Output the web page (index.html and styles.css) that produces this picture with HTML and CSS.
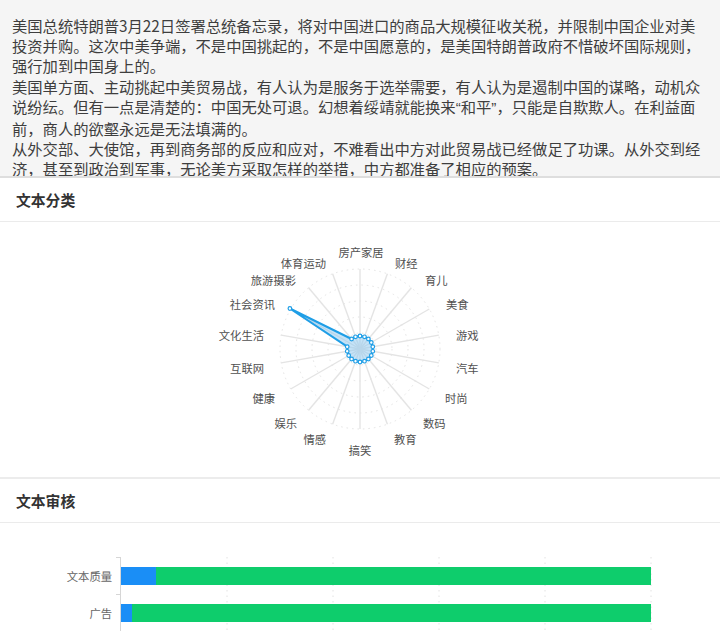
FILE: index.html
```html
<!DOCTYPE html>
<html lang="zh-CN">
<head>
<meta charset="utf-8">
<title>文本分析</title>
<link rel="stylesheet" href="styles.css">
</head>
<body>
<div class="page">
  <div class="source">
    <p>美国总统特朗普3月22日签署总统备忘录，将对中国进口的商品大规模征收关税，并限制中国企业对美投资并购。这次中美争端，不是中国挑起的，不是中国愿意的，是美国特朗普政府不惜破坏国际规则，强行加到中国身上的。</p>
    <p>美国单方面、主动挑起中美贸易战，有人认为是服务于选举需要，有人认为是遏制中国的谋略，动机众说纷纭。但有一点是清楚的：中国无处可退。幻想着绥靖就能换来<span class="q">“</span>和平<span class="q">”</span>，只能是自欺欺人。在利益面前，商人的欲壑永远是无法填满的。</p>
    <p>从外交部、大使馆，再到商务部的反应和应对，不难看出中方对此贸易战已经做足了功课。从外交到经济，甚至到政治到军事，无论美方采取怎样的举措，中方都准备了相应的预案。</p>
  </div>

  <section class="card">
    <div class="card-head">文本分类</div>
    <div class="card-body radar-body">
      <svg class="radar" width="720" height="255" viewBox="0 0 720 255">
        <g class="rings">
          <circle cx="360" cy="127" r="16"/>
          <circle cx="360" cy="127" r="32"/>
          <circle cx="360" cy="127" r="48"/>
          <circle cx="360" cy="127" r="64"/>
          <circle cx="360" cy="127" r="80"/>
        </g>
        <g class="spokes">
          <line x1="360" y1="127" x2="360.0" y2="47.0"/>
          <line x1="360" y1="127" x2="387.4" y2="51.8"/>
          <line x1="360" y1="127" x2="411.4" y2="65.7"/>
          <line x1="360" y1="127" x2="429.3" y2="87.0"/>
          <line x1="360" y1="127" x2="438.8" y2="113.1"/>
          <line x1="360" y1="127" x2="438.8" y2="140.9"/>
          <line x1="360" y1="127" x2="429.3" y2="167.0"/>
          <line x1="360" y1="127" x2="411.4" y2="188.3"/>
          <line x1="360" y1="127" x2="387.4" y2="202.2"/>
          <line x1="360" y1="127" x2="360.0" y2="207.0"/>
          <line x1="360" y1="127" x2="332.6" y2="202.2"/>
          <line x1="360" y1="127" x2="308.6" y2="188.3"/>
          <line x1="360" y1="127" x2="290.7" y2="167.0"/>
          <line x1="360" y1="127" x2="281.2" y2="140.9"/>
          <line x1="360" y1="127" x2="281.2" y2="113.1"/>
          <line x1="360" y1="127" x2="290.7" y2="87.0"/>
          <line x1="360" y1="127" x2="308.6" y2="65.7"/>
          <line x1="360" y1="127" x2="332.6" y2="51.8"/>
        </g>
        <polygon class="area" points="360.0,114.0 364.5,114.8 368.4,117.0 371.3,120.5 372.8,124.7 372.8,129.3 371.3,133.5 368.4,137.0 364.5,139.2 360.0,140.0 355.5,139.2 351.6,137.0 348.7,133.5 347.2,129.3 347.2,124.7 289.9,86.5 351.6,117.0 355.5,114.8"/>
        <g class="dots">
          <circle cx="360.0" cy="114.0" r="1.8"/>
          <circle cx="364.5" cy="114.8" r="1.8"/>
          <circle cx="368.4" cy="117.0" r="1.8"/>
          <circle cx="371.3" cy="120.5" r="1.8"/>
          <circle cx="372.8" cy="124.7" r="1.8"/>
          <circle cx="372.8" cy="129.3" r="1.8"/>
          <circle cx="371.3" cy="133.5" r="1.8"/>
          <circle cx="368.4" cy="137.0" r="1.8"/>
          <circle cx="364.5" cy="139.2" r="1.8"/>
          <circle cx="360.0" cy="140.0" r="1.8"/>
          <circle cx="355.5" cy="139.2" r="1.8"/>
          <circle cx="351.6" cy="137.0" r="1.8"/>
          <circle cx="348.7" cy="133.5" r="1.8"/>
          <circle cx="347.2" cy="129.3" r="1.8"/>
          <circle cx="347.2" cy="124.7" r="1.8"/>
          <circle cx="289.9" cy="86.5" r="1.8"/>
          <circle cx="351.6" cy="117.0" r="1.8"/>
          <circle cx="355.5" cy="114.8" r="1.8"/>
        </g>
        <g class="labels">
          <text x="361" y="30" text-anchor="middle">房产家居</text>
          <text x="395" y="41" text-anchor="start">财经</text>
          <text x="425" y="58" text-anchor="start">育儿</text>
          <text x="446" y="82" text-anchor="start">美食</text>
          <text x="456" y="113" text-anchor="start">游戏</text>
          <text x="456" y="146" text-anchor="start">汽车</text>
          <text x="445" y="176" text-anchor="start">时尚</text>
          <text x="423" y="201" text-anchor="start">数码</text>
          <text x="394" y="217" text-anchor="start">教育</text>
          <text x="360" y="228" text-anchor="middle">搞笑</text>
          <text x="326" y="217" text-anchor="end">情感</text>
          <text x="297" y="201" text-anchor="end">娱乐</text>
          <text x="275" y="176" text-anchor="end">健康</text>
          <text x="264" y="146" text-anchor="end">互联网</text>
          <text x="264" y="113" text-anchor="end">文化生活</text>
          <text x="275" y="82" text-anchor="end">社会资讯</text>
          <text x="296" y="58" text-anchor="end">旅游摄影</text>
          <text x="326" y="41" text-anchor="end">体育运动</text>
        </g>
      </svg>
    </div>
  </section>

  <section class="card">
    <div class="card-head">文本审核</div>
    <div class="card-body bar-body">
      <svg class="bars" width="720" height="110" viewBox="0 0 720 110">
        <g class="grid">
          <line x1="227" y1="34" x2="227" y2="110"/>
          <line x1="333" y1="34" x2="333" y2="110"/>
          <line x1="439" y1="34" x2="439" y2="110"/>
          <line x1="545" y1="34" x2="545" y2="110"/>
          <line x1="651" y1="34" x2="651" y2="110"/>
        </g>
        <g class="axis">
          <line x1="120.5" y1="34" x2="120.5" y2="110"/>
          <line x1="116" y1="34.5" x2="120.5" y2="34.5"/>
          <line x1="116" y1="71.5" x2="120.5" y2="71.5"/>
          <line x1="116" y1="108.5" x2="120.5" y2="108.5"/>
        </g>
        <rect class="ok" x="156" y="44" width="495" height="18"/>
        <rect class="bad" x="121" y="44" width="35" height="18"/>
        <rect class="ok" x="132" y="81" width="519" height="18"/>
        <rect class="bad" x="121" y="81" width="11" height="18"/>
        <g class="cat">
          <text x="112" y="53" text-anchor="end">文本质量</text>
          <text x="112" y="90" text-anchor="end">广告</text>
        </g>
      </svg>
    </div>
  </section>
</div>
</body>
</html>
```

FILE: styles.css
```css
* {
  box-sizing: border-box;
}

html, body {
  margin: 0;
  padding: 0;
  background: #ffffff;
}

body {
  width: 720px;
  height: 631px;
  overflow: hidden;
  font-family: "Noto Sans CJK SC", "Noto Sans", sans-serif;
  color: #444444;
}

.page {
  display: flex;
  flex-direction: column;
}

.source {
  height: 178px;
  padding: 15px 14px 0 12px;
  background: #f5f5f5;
  border-bottom: 2px solid #dedede;
  overflow: hidden;
  font-size: 15.3px;
  line-height: 20.2px;
  color: #3e3e3e;
}

.source p {
  margin: 0;
}

.source .q {
  font-family: "Liberation Sans", "Noto Sans", sans-serif;
}

.card {
  display: flex;
  flex-direction: column;
  background: #ffffff;
}

.card + .card {
  border-top: 2px solid #ececec;
}

.card-head {
  height: 44px;
  padding-left: 16px;
  display: flex;
  align-items: center;
  font-size: 14.8px;
  font-weight: 700;
  color: #333333;
  border-bottom: 1px solid #ebebeb;
}

.card-body {
  display: flex;
}

.radar-body {
  height: 255px;
}

.bar-body {
  height: 110px;
}

.radar .rings circle {
  fill: none;
  stroke: #e4e4e4;
  stroke-width: 1;
  stroke-dasharray: 1.5 4;
}

.radar .spokes line {
  stroke: #e4e4e4;
  stroke-width: 1.4;
}

.radar .area {
  fill: rgba(140, 200, 240, 0.5);
  stroke: #1f9ee6;
  stroke-width: 2;
  stroke-linejoin: round;
}

.radar .dots circle {
  fill: #ffffff;
  stroke: #1f9ee6;
  stroke-width: 1.2;
}

.radar .labels text {
  font-size: 11.3px;
  fill: #505050;
  dominant-baseline: central;
}

.bars .grid line {
  stroke: #e2e2e2;
  stroke-width: 1;
  stroke-dasharray: 1.5 4;
}

.bars .axis line {
  stroke: #d6d6d6;
  stroke-width: 1;
}

.bars .ok {
  fill: #0ecd6c;
}

.bars .bad {
  fill: #1a8ef6;
}

.bars .cat text {
  font-size: 11.3px;
  fill: #666666;
  dominant-baseline: central;
}
```
